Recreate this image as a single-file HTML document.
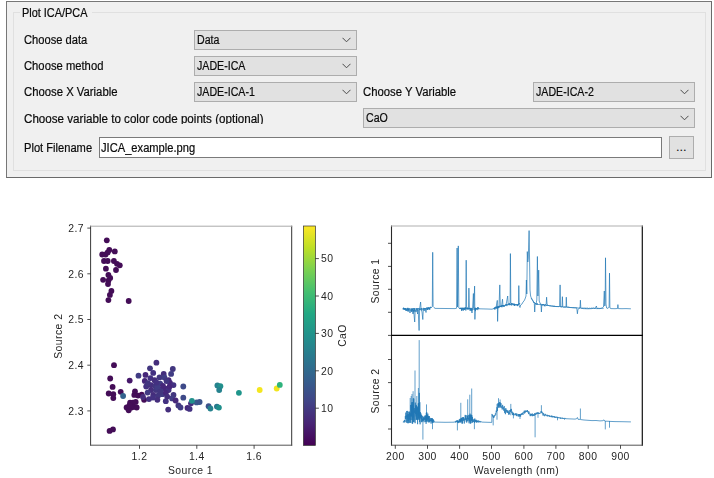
<!DOCTYPE html>
<html><head><meta charset="utf-8"><title>Plot ICA/PCA</title>
<style>
html,body{margin:0;padding:0;background:#fff;}
body{width:714px;height:478px;position:relative;overflow:hidden;font-family:"Liberation Sans",sans-serif;font-size:11px;color:#0a0a0a;-webkit-text-stroke:0.2px #0a0a0a;}
.abs{position:absolute;}
#frame{left:6px;top:1px;width:704px;height:175px;background:#f0f0f0;border:1px solid #777;border-right:1.5px solid #6a6a6a;border-bottom:1.5px solid #6a6a6a;box-sizing:content-box;}
#group{left:13px;top:12px;width:691px;height:157px;border:1px solid #e0e0e0;box-sizing:content-box;}
#gtitle{left:20px;top:6px;height:14px;line-height:14px;padding:0 2px;background:#f0f0f0;white-space:nowrap;width:68px;}
#gtitle span{display:inline-block;font-size:12px;transform:scaleX(0.909);transform-origin:0 50%;margin-left:-0.3px;}
.lbl{left:23.8px;height:16px;line-height:16px;white-space:nowrap;font-size:12px;transform-origin:0 50%;}
.combo{height:18px;background:#e1e1e1;border:1px solid #adadad;box-sizing:content-box;}
.combo span{position:absolute;left:2.4px;top:1px;line-height:16px;white-space:nowrap;font-size:12px;transform:scaleX(0.885);transform-origin:0 50%;}
.combo svg{position:absolute;right:5px;top:6px;}
#edit{left:99px;top:137px;width:561px;height:19px;background:#fff;border:1px solid #7a7a7a;box-sizing:content-box;}
#edit span{position:absolute;left:1.1px;top:2px;line-height:16px;white-space:nowrap;font-size:12px;transform:scaleX(0.929);transform-origin:0 50%;}
#btn{left:669px;top:136px;width:23px;height:21px;background:#e1e1e1;border:1px solid #adadad;box-sizing:content-box;}
#btn span{position:absolute;left:0;width:23px;text-align:center;top:3px;line-height:14px;letter-spacing:0.5px;}
svg text{font-family:"Liberation Sans",sans-serif;fill:#262626;}
</style></head><body>
<div id="frame" class="abs"></div>
<div id="group" class="abs"></div>
<div id="gtitle" class="abs"><span>Plot ICA/PCA</span></div>

<div class="abs lbl" style="top:32px;transform:scaleX(0.929);">Choose data</div>
<div class="abs lbl" style="top:58px;transform:scaleX(0.937);">Choose method</div>
<div class="abs lbl" style="top:84px;transform:scaleX(0.943);">Choose X Variable</div>
<div class="abs lbl" style="top:111px;height:13px;overflow:hidden;transform:scaleX(0.968);">Choose variable to color code points (optional)</div>
<div class="abs lbl" style="top:140px;transform:scaleX(0.928);">Plot Filename</div>
<div class="abs lbl" style="left:362.7px;top:84px;transform:scaleX(0.943);">Choose Y Variable</div>

<div class="abs combo" style="left:194px;top:30px;width:161px;"><span>Data</span><svg width="9" height="6" viewBox="0 0 9 6"><path d="M0.5,0.8 L4.5,4.8 L8.5,0.8" fill="none" stroke="#4a4a4a" stroke-width="1"/></svg></div>
<div class="abs combo" style="left:194px;top:56px;width:161px;"><span>JADE-ICA</span><svg width="9" height="6" viewBox="0 0 9 6"><path d="M0.5,0.8 L4.5,4.8 L8.5,0.8" fill="none" stroke="#4a4a4a" stroke-width="1"/></svg></div>
<div class="abs combo" style="left:194px;top:82px;width:161px;"><span>JADE-ICA-1</span><svg width="9" height="6" viewBox="0 0 9 6"><path d="M0.5,0.8 L4.5,4.8 L8.5,0.8" fill="none" stroke="#4a4a4a" stroke-width="1"/></svg></div>
<div class="abs combo" style="left:533px;top:82px;width:160px;"><span>JADE-ICA-2</span><svg width="9" height="6" viewBox="0 0 9 6"><path d="M0.5,0.8 L4.5,4.8 L8.5,0.8" fill="none" stroke="#4a4a4a" stroke-width="1"/></svg></div>
<div class="abs combo" style="left:363px;top:108px;width:330px;"><span>CaO</span><svg width="9" height="6" viewBox="0 0 9 6"><path d="M0.5,0.8 L4.5,4.8 L8.5,0.8" fill="none" stroke="#4a4a4a" stroke-width="1"/></svg></div>

<div id="edit" class="abs"><span>JICA_example.png</span></div>
<div id="btn" class="abs"><span>...</span></div>

<svg class="abs" style="left:0;top:0;" width="714" height="478" viewBox="0 0 714 478">
<defs>
<linearGradient id="vir" x1="0" y1="1" x2="0" y2="0">
<stop offset="0" stop-color="#440154"/><stop offset="0.1" stop-color="#482475"/><stop offset="0.2" stop-color="#414487"/><stop offset="0.3" stop-color="#355f8d"/><stop offset="0.4" stop-color="#2a788e"/><stop offset="0.5" stop-color="#21918c"/><stop offset="0.6" stop-color="#22a884"/><stop offset="0.7" stop-color="#44bf70"/><stop offset="0.8" stop-color="#7ad151"/><stop offset="0.9" stop-color="#bddf26"/><stop offset="1" stop-color="#fde725"/>
</linearGradient>
</defs>
<!-- scatter -->
<g><circle cx="106.8" cy="240.3" r="2.9" fill="#440d57"/><circle cx="102.2" cy="254.5" r="2.9" fill="#440d57"/><circle cx="105.6" cy="254.5" r="2.9" fill="#440d57"/><circle cx="109.3" cy="249.9" r="2.9" fill="#440d57"/><circle cx="114.8" cy="251.4" r="2.9" fill="#440d57"/><circle cx="107.7" cy="252.4" r="2.9" fill="#440d57"/><circle cx="104.0" cy="261.0" r="2.9" fill="#440d57"/><circle cx="107.7" cy="261.0" r="2.9" fill="#440d57"/><circle cx="113.9" cy="261.0" r="2.9" fill="#440d57"/><circle cx="117.0" cy="263.8" r="2.9" fill="#440d57"/><circle cx="119.8" cy="265.3" r="2.9" fill="#440d57"/><circle cx="105.9" cy="268.7" r="2.9" fill="#440d57"/><circle cx="116.0" cy="270.0" r="2.9" fill="#440d57"/><circle cx="108.4" cy="274.9" r="2.9" fill="#440d57"/><circle cx="110.2" cy="277.9" r="2.9" fill="#440d57"/><circle cx="103.1" cy="279.8" r="2.9" fill="#440d57"/><circle cx="108.4" cy="280.7" r="2.9" fill="#440d57"/><circle cx="108.0" cy="284.1" r="2.9" fill="#440d57"/><circle cx="111.4" cy="290.9" r="2.9" fill="#440d57"/><circle cx="109.9" cy="294.9" r="2.9" fill="#440d57"/><circle cx="108.4" cy="300.1" r="2.9" fill="#440d57"/><circle cx="128.7" cy="301.0" r="2.9" fill="#440d57"/><circle cx="114.0" cy="365.2" r="2.9" fill="#440d57"/><circle cx="110.2" cy="378.5" r="2.9" fill="#440d57"/><circle cx="112.6" cy="386.9" r="2.9" fill="#440d57"/><circle cx="108.7" cy="393.5" r="2.9" fill="#440d57"/><circle cx="113.3" cy="394.2" r="2.9" fill="#440d57"/><circle cx="113.3" cy="398.1" r="2.9" fill="#440d57"/><circle cx="120.7" cy="391.8" r="2.9" fill="#440d57"/><circle cx="135.0" cy="391.4" r="2.9" fill="#440d57"/><circle cx="134.3" cy="394.9" r="2.9" fill="#440d57"/><circle cx="138.1" cy="395.6" r="2.9" fill="#440d57"/><circle cx="141.7" cy="394.6" r="2.9" fill="#440d57"/><circle cx="144.1" cy="399.8" r="2.9" fill="#440d57"/><circle cx="130.1" cy="402.6" r="2.9" fill="#440d57"/><circle cx="132.9" cy="402.6" r="2.9" fill="#440d57"/><circle cx="135.7" cy="401.9" r="2.9" fill="#440d57"/><circle cx="126.6" cy="407.5" r="2.9" fill="#440d57"/><circle cx="128.7" cy="410.3" r="2.9" fill="#440d57"/><circle cx="131.5" cy="407.5" r="2.9" fill="#440d57"/><circle cx="134.3" cy="406.8" r="2.9" fill="#440d57"/><circle cx="136.7" cy="407.5" r="2.9" fill="#440d57"/><circle cx="129.4" cy="405.4" r="2.9" fill="#440d57"/><circle cx="109.6" cy="430.9" r="2.9" fill="#440d57"/><circle cx="113.0" cy="429.4" r="2.9" fill="#440d57"/><circle cx="129.7" cy="380.6" r="2.9" fill="#46186a"/><circle cx="123.1" cy="396.0" r="2.9" fill="#33638d"/><circle cx="156.4" cy="362.7" r="2.9" fill="#452e7c"/><circle cx="150.0" cy="368.3" r="2.9" fill="#42367f"/><circle cx="138.5" cy="375.7" r="2.9" fill="#413c84"/><circle cx="145.5" cy="374.9" r="2.9" fill="#46277a"/><circle cx="153.2" cy="372.9" r="2.9" fill="#433181"/><circle cx="163.7" cy="373.9" r="2.9" fill="#452e7c"/><circle cx="172.8" cy="369.0" r="2.9" fill="#42367f"/><circle cx="171.1" cy="373.9" r="2.9" fill="#413c84"/><circle cx="144.8" cy="380.9" r="2.9" fill="#46277a"/><circle cx="150.4" cy="378.1" r="2.9" fill="#433181"/><circle cx="154.6" cy="380.2" r="2.9" fill="#452e7c"/><circle cx="159.5" cy="377.4" r="2.9" fill="#42367f"/><circle cx="164.4" cy="377.4" r="2.9" fill="#413c84"/><circle cx="168.6" cy="380.2" r="2.9" fill="#46277a"/><circle cx="146.2" cy="386.5" r="2.9" fill="#433181"/><circle cx="151.1" cy="385.1" r="2.9" fill="#452e7c"/><circle cx="155.3" cy="385.8" r="2.9" fill="#42367f"/><circle cx="160.2" cy="383.7" r="2.9" fill="#413c84"/><circle cx="170.0" cy="383.0" r="2.9" fill="#46277a"/><circle cx="173.5" cy="385.1" r="2.9" fill="#433181"/><circle cx="151.1" cy="390.0" r="2.9" fill="#452e7c"/><circle cx="156.0" cy="390.0" r="2.9" fill="#42367f"/><circle cx="161.6" cy="389.3" r="2.9" fill="#413c84"/><circle cx="165.8" cy="388.6" r="2.9" fill="#46277a"/><circle cx="168.6" cy="390.0" r="2.9" fill="#433181"/><circle cx="153.2" cy="394.9" r="2.9" fill="#452e7c"/><circle cx="158.1" cy="395.6" r="2.9" fill="#42367f"/><circle cx="162.3" cy="394.2" r="2.9" fill="#413c84"/><circle cx="165.8" cy="392.8" r="2.9" fill="#46277a"/><circle cx="149.0" cy="399.1" r="2.9" fill="#433181"/><circle cx="157.4" cy="399.8" r="2.9" fill="#452e7c"/><circle cx="173.5" cy="394.9" r="2.9" fill="#42367f"/><circle cx="172.1" cy="398.4" r="2.9" fill="#413c84"/><circle cx="175.6" cy="400.5" r="2.9" fill="#46277a"/><circle cx="165.8" cy="401.2" r="2.9" fill="#433181"/><circle cx="168.2" cy="409.6" r="2.9" fill="#452e7c"/><circle cx="178.4" cy="405.4" r="2.9" fill="#42367f"/><circle cx="180.5" cy="407.5" r="2.9" fill="#413c84"/><circle cx="187.5" cy="407.9" r="2.9" fill="#46277a"/><circle cx="189.6" cy="408.9" r="2.9" fill="#433181"/><circle cx="191.0" cy="403.3" r="2.9" fill="#452e7c"/><circle cx="148.0" cy="383.2" r="2.9" fill="#42367f"/><circle cx="157.3" cy="387.4" r="2.9" fill="#413c84"/><circle cx="163.0" cy="386.0" r="2.9" fill="#46277a"/><circle cx="153.0" cy="397.6" r="2.9" fill="#433181"/><circle cx="167.2" cy="396.6" r="2.9" fill="#452e7c"/><circle cx="160.0" cy="392.0" r="2.9" fill="#42367f"/><circle cx="147.6" cy="392.6" r="2.9" fill="#413c84"/><circle cx="169.6" cy="386.6" r="2.9" fill="#46277a"/><circle cx="156.6" cy="382.6" r="2.9" fill="#433181"/><circle cx="143.0" cy="397.0" r="2.9" fill="#452e7c"/><circle cx="166.5" cy="381.0" r="2.9" fill="#42367f"/><circle cx="183.3" cy="386.5" r="2.9" fill="#3e4a89"/><circle cx="183.3" cy="397.7" r="2.9" fill="#3e4a89"/><circle cx="196.6" cy="402.4" r="2.9" fill="#3a5a8c"/><circle cx="199.6" cy="402.0" r="2.9" fill="#3b548b"/><circle cx="191.9" cy="400.8" r="2.9" fill="#21908c"/><circle cx="208.6" cy="406.2" r="2.9" fill="#3b528b"/><circle cx="210.4" cy="408.5" r="2.9" fill="#26828e"/><circle cx="217.4" cy="385.4" r="2.9" fill="#26828e"/><circle cx="220.4" cy="386.2" r="2.9" fill="#21908c"/><circle cx="219.2" cy="390.0" r="2.9" fill="#26828e"/><circle cx="216.9" cy="406.6" r="2.9" fill="#2a788e"/><circle cx="218.9" cy="407.6" r="2.9" fill="#1f8f8b"/><circle cx="238.9" cy="392.8" r="2.9" fill="#1f958b"/><circle cx="259.7" cy="390.0" r="2.9" fill="#f4e61e"/><circle cx="276.7" cy="388.5" r="2.9" fill="#f1e51d"/><circle cx="279.8" cy="384.9" r="2.9" fill="#2eb37c"/></g>
<g stroke-width="1" fill="none">
<line x1="90.6" y1="225.7" x2="90.6" y2="445.7" stroke="#3a3a3a"/>
<line x1="291.7" y1="225.7" x2="291.7" y2="445.7" stroke="#333"/>
<line x1="90.3" y1="226.2" x2="292.2" y2="226.2" stroke="#aaa"/>
<line x1="90.3" y1="445.2" x2="292.2" y2="445.2" stroke="#555"/>
</g>
<g stroke="#222" stroke-width="0.8">
<line x1="87.3" y1="228.1" x2="90.6" y2="228.1"/><line x1="87.3" y1="273.8" x2="90.6" y2="273.8"/><line x1="87.3" y1="319.5" x2="90.6" y2="319.5"/><line x1="87.3" y1="365.2" x2="90.6" y2="365.2"/><line x1="87.3" y1="410.9" x2="90.6" y2="410.9"/>
<line x1="139.5" y1="445.2" x2="139.5" y2="448.8" /><line x1="196.8" y1="445.2" x2="196.8" y2="448.8" /><line x1="254.1" y1="445.2" x2="254.1" y2="448.8" />
</g>
<!-- colorbar -->
<rect x="303.4" y="226" width="12" height="219.4" fill="url(#vir)"/>
<rect x="303.4" y="226" width="12" height="219.4" fill="none" stroke="#333" stroke-width="0.7"/>
<g stroke="#222" stroke-width="0.8">
<line x1="315.4" y1="258.6" x2="318.9" y2="258.6"/><line x1="315.4" y1="296" x2="318.9" y2="296"/><line x1="315.4" y1="333.4" x2="318.9" y2="333.4"/><line x1="315.4" y1="370.8" x2="318.9" y2="370.8"/><line x1="315.4" y1="408.2" x2="318.9" y2="408.2"/>
</g>
<!-- spectra -->
<path d="M402.8,308.6 L404.0,308.2 L405.0,309.5 L406.0,308.8 L407.0,311.0 L407.6,309.0 L408.5,310.5 L409.2,309.0 L410.0,313.0 L410.6,309.5 L411.5,312.0 L412.2,310.0 L413.0,314.0 L413.6,310.0 L414.7,322.0 L415.2,310.0 L416.0,312.0 L416.8,309.5 L417.6,314.0 L418.2,310.0 L419.1,330.5 L419.6,309.0 L420.6,302.0 L421.1,309.0 L422.0,312.0 L422.8,319.5 L423.3,309.0 L424.2,311.0 L425.0,308.5 L426.0,312.5 L426.6,308.5 L427.6,310.0 L428.5,308.0 L429.5,309.0 L430.5,307.5 L431.5,307.5 L432.3,306.5 L432.7,252.3 L433.1,306.5 L434.0,307.5 L435.0,308.4 L455.0,308.6 L456.6,308.2 L457.1,248.0 L457.5,307.0 L458.3,245.9 L458.8,308.0 L460.0,308.6 L461.0,307.5 L462.0,310.5 L463.0,308.0 L464.0,309.5 L465.0,307.5 L465.8,308.0 L466.2,260.2 L466.6,308.0 L467.5,309.5 L468.5,307.0 L468.9,288.1 L469.4,308.0 L470.2,311.0 L471.0,308.0 L472.0,313.0 L472.6,308.0 L473.4,293.5 L473.8,308.0 L474.6,286.1 L474.9,319.4 L475.3,308.0 L476.5,308.8 L478.0,307.0 L479.0,308.8 L487.0,309.0 L492.0,309.2 L494.0,308.5 L495.0,307.0 L496.0,308.0 L497.3,300.4 L497.6,321.4 L498.0,307.0 L499.0,306.5 L499.8,284.9 L500.3,306.5 L501.5,306.8 L502.5,299.2 L503.0,306.3 L504.5,306.0 L506.0,305.0 L507.7,296.0 L508.2,304.5 L509.5,304.0 L510.1,303.0 L510.4,253.6 L510.8,303.0 L512.0,303.8 L514.0,304.5 L516.0,305.0 L518.0,305.0 L518.5,304.0 L518.8,285.6 L519.2,305.5 L520.0,307.5 L520.6,305.0 L522.0,304.0 L523.0,302.0 L524.0,301.0 L525.0,299.0 L526.0,296.0 L526.4,280.0 L526.8,294.0 L527.3,251.6 L527.8,262.0 L528.3,258.0 L529.1,230.6 L529.6,262.0 L530.0,290.0 L530.6,296.0 L531.5,298.5 L533.0,301.0 L534.3,303.0 L534.7,312.0 L535.2,303.5 L536.0,304.0 L536.8,300.0 L537.4,256.5 L537.9,296.0 L538.7,270.1 L539.2,301.0 L540.0,303.0 L541.0,304.5 L541.4,312.0 L541.8,305.0 L543.0,304.5 L545.0,305.0 L546.2,304.0 L546.6,297.2 L547.1,305.0 L549.0,305.7 L553.0,306.2 L557.0,306.6 L559.6,306.5 L560.1,284.9 L560.5,306.8 L562.0,307.0 L562.4,296.7 L562.8,307.0 L565.0,307.2 L566.0,307.0 L566.3,297.2 L566.7,307.2 L570.0,307.5 L574.0,307.8 L576.8,308.0 L577.4,313.8 L577.9,309.5 L579.0,308.5 L580.0,308.0 L580.4,300.2 L580.8,308.0 L583.0,308.6 L588.0,308.8 L592.0,308.6 L594.0,308.0 L595.0,308.8 L596.4,306.0 L597.0,308.6 L600.0,308.6 L602.0,308.0 L603.5,307.0 L604.3,291.0 L604.8,306.0 L605.2,300.0 L605.5,257.8 L606.0,304.0 L606.6,308.0 L608.0,308.4 L609.1,307.0 L609.5,273.1 L609.9,308.0 L611.0,308.6 L615.0,308.7 L617.5,308.5 L617.9,304.6 L618.3,308.6 L622.0,308.7 L626.0,308.6 L630.9,308.8 M403.0,308.2 L403.3,309.6 L403.6,307.7 L403.9,309.3 L404.2,308.1 L404.5,309.8 L404.8,308.5 L405.1,309.5 L405.4,308.1 L405.7,310.7 L406.0,308.6 L406.3,309.0 L406.6,308.7 L406.9,310.9 L407.2,308.1 L407.5,308.8 L407.8,307.8 L408.1,311.8 L408.4,308.2 L408.7,310.1 L409.0,308.7 L409.3,308.9 L409.6,308.3 L409.9,308.9 L410.2,308.7 L410.5,309.1 L410.8,308.9 L411.1,309.6 L411.4,308.5 L411.7,311.2 L412.0,308.5 L412.3,310.3 L412.6,308.5 L412.9,310.4 L413.2,308.6 L413.5,309.3 L413.8,308.1 L414.1,312.2 L414.4,308.2 L414.7,310.7 L415.0,308.8 L415.3,309.3 L415.6,308.8 L415.9,309.1 L416.2,308.4 L416.5,309.7 L416.8,308.3 L417.1,309.7 L417.4,308.2 L417.7,311.5 M418.0,309.2 L418.3,309.3 L418.6,308.3 L418.9,309.7 L419.2,308.3 L419.5,309.6 L419.8,309.2 L420.1,310.2 L420.4,308.5 L420.7,309.3 L421.0,309.0 L421.3,309.3 L421.6,308.1 L421.9,310.3 L422.2,308.8 L422.5,309.0 L422.8,308.7 L423.1,308.8 L423.4,307.9 L423.7,308.8 L424.0,308.1 L424.3,309.0 L424.6,308.4 L424.9,309.7 L425.2,308.3 L425.5,309.3 L425.8,308.2 L426.1,308.7 L426.4,308.0 L426.7,308.4 L427.0,307.2 L427.3,309.5 L427.6,307.8 L427.9,309.7 L428.2,307.7 L428.5,308.3 L428.8,307.0 L429.1,308.7 L429.4,307.7 L429.7,309.9 L430.0,307.5 L430.3,307.8 L430.6,306.8 L430.9,307.8 L431.2,307.2 M459.5,308.6 L459.8,308.8 L460.1,308.0 L460.4,308.9 L460.7,308.0 L461.0,309.1 L461.3,308.2 L461.6,310.8 L461.9,308.1 L462.2,309.5 L462.5,307.7 L462.8,308.9 L463.1,308.6 L463.4,310.6 L463.7,307.7 L464.0,308.9 L464.3,308.6 L464.6,310.0 L464.9,307.6 L465.2,308.9 L465.5,307.6 L465.8,310.5 L466.1,308.1 L466.4,309.2 L466.7,308.7 L467.0,308.9 L467.3,307.6 L467.6,309.0 L467.9,307.9 L468.2,309.0 L468.5,307.8 L468.8,309.7 L469.1,308.5 L469.4,309.0 L469.7,308.0 L470.0,308.9 L470.3,308.6 L470.6,309.6 L470.9,307.8 L471.2,309.7 L471.5,308.5 L471.8,310.8 L472.1,308.7 L472.4,308.9 L472.7,308.6 L473.0,309.4 L473.3,308.9 L473.6,309.0 L473.9,308.5 L474.2,309.7 L474.5,308.8 L474.8,309.2 L475.1,307.8 L475.4,311.1 L475.7,308.1 L476.0,310.0 L476.3,308.2 L476.6,309.0 L476.9,308.9 L477.2,309.0 L477.5,307.8 L477.8,310.1 L478.1,307.8 L478.4,309.0 L478.7,308.2 M494.0,307.9 L494.3,309.1 L494.6,307.8 L494.9,309.6 L495.2,307.8 L495.5,308.2 L495.8,306.8 L496.1,308.8 L496.4,306.7 L496.7,308.1 L497.0,306.5 L497.3,308.5 L497.6,306.7 L497.9,307.8 L498.2,306.0 L498.5,308.1 L498.8,306.4 L499.1,307.7 L499.4,305.8 L499.7,307.1 L500.0,305.9 L500.3,306.7 L500.6,305.8 L500.9,306.9 L501.2,306.1 L501.5,306.8 L501.8,305.1 L502.1,307.2 L502.4,305.2 L502.7,306.1 L503.0,305.0 L503.3,306.2 L503.6,305.2 L503.9,306.6 L504.2,305.4 L504.5,306.3 L504.8,305.3 L505.1,305.8 L505.4,304.7 L505.7,305.2 L506.0,304.3 L506.3,305.3 L506.6,304.2 L506.9,306.1 L507.2,304.4 L507.5,304.6 L507.8,304.2 L508.1,305.2 L508.4,304.2 L508.7,304.4 L509.0,303.3 L509.3,304.9 L509.6,303.7 L509.9,305.3 L510.2,303.7 L510.5,304.8 L510.8,303.9 L511.1,304.4 L511.4,303.4 L511.7,305.5 L512.0,303.4 L512.3,304.5 L512.6,303.7 L512.9,304.5 L513.2,304.3 L513.5,304.8 L513.8,303.6 L514.1,305.7 L514.4,303.8 L514.7,306.0 L515.0,304.3 L515.3,304.7 L515.6,304.2 L515.9,304.9 L516.2,304.6 L516.5,305.1 L516.8,304.2 L517.1,305.3 L517.4,304.6 L517.7,306.1 L518.0,304.0 L518.3,305.1 L518.6,304.6 L518.9,304.5 L519.2,303.4 L519.5,304.1 L519.8,303.2 M531.0,298.2 L531.4,298.7 L531.8,298.4 L532.2,299.7 L532.6,300.2 L533.0,301.3 L533.4,301.4 L533.8,302.8 L534.2,302.0 L534.6,302.6 L535.0,303.0 L535.4,304.0 L535.8,303.4 L536.2,304.6 L536.6,303.5 L537.0,305.0 L537.4,303.4 L537.8,304.8 L538.2,304.1 L538.6,304.6 L539.0,304.2 L539.4,304.3 L539.8,304.0 L540.2,305.1 L540.6,304.3 L541.0,304.6 L541.4,304.3 L541.8,305.3 L542.2,304.3 L542.6,305.3 L543.0,304.2 L543.4,305.1 L543.8,304.3 L544.2,306.1 L544.6,305.0 L545.0,306.3 L545.4,304.6 L545.8,305.2 L546.2,304.9 L546.6,305.9 L547.0,304.7 L547.4,305.7 L547.8,305.1 M548.0,305.2 L548.5,306.0 L549.0,305.3 L549.5,305.9 L550.0,305.5 L550.5,305.8 L551.0,305.6 L551.5,306.3 L552.0,305.7 L552.5,306.3 L553.0,305.9 L553.5,306.6 L554.0,305.7 L554.5,306.7 L555.0,306.0 L555.5,306.6 L556.0,306.1 L556.5,306.8 L557.0,306.0 L557.5,306.5 L558.0,306.4 L558.5,306.6 L559.0,306.3 L559.5,306.9 L560.0,306.4 L560.5,306.6 L561.0,306.3 L561.5,306.7 L562.0,306.4 L562.5,306.8 L563.0,306.7 L563.5,307.2 L564.0,306.8 L564.5,306.9 L565.0,306.7 L565.5,307.3 L566.0,306.7 L566.5,307.3 L567.0,306.7 L567.5,307.3 L568.0,306.8 L568.5,307.2 L569.0,307.1 L569.5,307.4 L570.0,307.2 L570.5,307.7 L571.0,307.1 L571.5,307.6 L572.0,307.1 L572.5,307.7 L573.0,307.4 L573.5,307.6 L574.0,307.2 L574.5,308.1 L575.0,307.6 L575.5,308.1 L576.0,307.3 L576.5,307.9 L577.0,307.6 L577.5,307.8 L578.0,307.6 L578.5,308.0 L579.0,307.7 L579.5,308.0 L580.0,307.6 L580.5,308.2 L581.0,307.9 L581.5,308.4 L582.0,307.8 L582.5,308.2 L583.0,307.8 L583.5,308.1 L584.0,307.8 L584.5,308.2 L585.0,307.7 L585.5,308.6 L586.0,308.0 L586.5,308.2 L587.0,308.1 L587.5,308.2 L588.0,307.8 L588.5,308.6 L589.0,308.0 L589.5,308.2 L590.0,308.1 L590.5,308.4 L591.0,307.8 L591.5,308.2 L592.0,307.9 L592.5,308.2 L593.0,308.1 L593.5,308.2 L594.0,307.9 L594.5,308.3 L595.0,308.1 L595.5,308.5 L596.0,308.2 L596.5,308.6 L597.0,308.2 L597.5,308.4 L598.0,308.2 L598.5,308.3 L599.0,308.1 L599.5,308.4 L600.0,308.2 L600.5,308.4 L601.0,308.1 L601.5,308.4 L602.0,308.3 L602.5,308.6 L603.0,308.1 L603.5,308.5" fill="none" stroke="#1f77b4" stroke-width="0.7" stroke-linejoin="round"/>
<path d="M403.1,422.2 L403.3,421.9 L403.6,422.2 L403.8,421.2 L404.1,422.5 L404.3,420.3 L404.6,421.3 L404.8,420.1 L405.1,422.2 L405.3,416.2 L405.6,419.1 L405.8,412.6 L406.1,417.2 L406.3,415.3 L406.6,422.7 L406.8,411.0 L407.1,418.9 L407.3,410.9 L407.6,423.2 L407.8,414.5 L408.1,421.1 L408.3,414.0 L408.6,423.2 L408.8,411.7 L409.1,419.6 L409.3,411.6 L409.6,422.8 L409.8,412.7 L410.1,416.6 L410.3,413.4 L410.6,422.9 L410.8,405.0 L411.1,415.9 L411.3,404.8 L411.6,416.6 L411.8,402.4 L412.1,423.4 L412.3,402.0 L412.6,423.8 L412.8,404.8 L413.1,417.8 L413.3,398.3 L413.6,422.2 L413.8,398.6 L414.1,421.8 L414.3,408.1 L414.6,412.8 L414.8,410.4 L415.1,423.2 L415.3,402.6 L415.6,414.2 L415.8,405.6 L416.1,416.5 L416.3,404.9 L416.6,419.5 L416.8,406.1 L417.1,419.9 L417.3,406.8 L417.6,424.2 L417.8,407.9 L418.1,415.4 L418.3,403.3 L418.6,418.8 L418.8,403.2 L419.1,418.1 L419.3,392.9 L419.6,422.1 L419.8,402.2 L420.1,424.3 L420.3,412.0 L420.6,417.7 L420.8,413.2 L421.1,419.2 L421.3,414.7 L421.6,422.2 L421.8,415.4 L422.1,421.9 L422.3,418.9 L422.6,420.7 L422.8,416.0 L423.1,420.4 L423.3,417.5 L423.6,420.6 L423.8,417.3 L424.1,422.2 L424.3,417.6 L424.6,419.6 L424.8,415.7 L425.1,420.0 L425.3,415.9 L425.6,421.9 L425.8,415.3 L426.1,423.8 L426.3,412.8 L426.6,421.3 L426.8,412.3 L427.1,422.1 L427.3,414.9 L427.6,420.7 L427.8,413.6 L428.1,419.1 L428.3,415.9 L428.6,422.4 L428.8,416.3 L429.1,421.4 L429.3,416.1 L429.6,422.3 L429.8,419.4 L430.1,421.4 L430.3,417.9 L430.6,421.0 L430.8,419.8 L431.1,423.6 L431.3,418.4 L431.6,421.3 L431.8,418.0 L432.1,422.3 L432.3,418.3 L432.6,422.7 L432.8,419.1 L433.1,422.9 L433.3,419.5 L433.6,421.5 L433.8,420.5 L434.1,422.2 L434.3,421.6 L434.6,422.2 L435.2,422.1 L445.0,422.3 L454.0,422.2 L454.4,421.9 L454.7,422.2 L455.0,421.7 L455.3,422.6 L455.6,421.3 L455.9,422.0 L456.2,420.8 L456.5,421.8 L456.8,420.5 L457.1,422.4 L457.4,420.3 L457.7,422.4 L458.0,420.5 L458.3,423.1 L458.6,421.0 L458.9,422.5 L459.2,419.6 L459.5,422.1 L459.8,418.9 L460.1,422.8 L460.4,419.3 L460.7,422.0 L461.0,418.2 L461.3,421.5 L461.6,417.9 L461.9,423.5 L462.2,417.6 L462.5,423.5 L462.8,417.2 L463.1,421.1 L463.4,417.1 L463.7,420.4 L464.0,417.9 L464.3,423.5 L464.6,419.0 L464.9,419.6 L465.2,414.9 L465.5,419.7 L465.8,415.4 L466.1,421.5 L466.4,418.3 L466.7,422.6 L467.0,415.2 L467.3,419.1 L467.6,416.1 L467.9,421.4 L468.2,417.9 L468.5,419.5 L468.8,414.9 L469.1,423.3 L469.4,415.0 L469.7,421.5 L470.0,413.6 L470.3,423.7 L470.6,414.9 L470.9,423.3 L471.2,414.7 L471.5,420.6 L471.8,415.1 L472.1,422.8 L472.4,416.9 L472.7,422.3 L473.0,418.9 L473.3,422.0 L473.6,420.3 L473.9,420.8 L474.2,419.3 L474.5,422.9 L474.8,418.5 L475.1,421.3 L475.4,420.2 L475.7,422.0 L476.0,419.7 L476.3,422.7 L476.6,420.4 L476.9,422.1 L477.2,420.5 L477.5,422.0 L477.8,420.9 L478.1,422.6 L478.4,420.5 L478.7,421.7 L479.0,421.4 L479.3,421.8 L479.6,420.9 L479.9,422.4 L480.2,421.2 L480.5,422.2 L480.8,421.6 L482.0,422.1 L488.0,422.3 L491.8,422.4 L491.9,414.0 L492.2,414.2 L492.6,416.4 L493.0,415.0 L493.4,417.8 L493.8,416.3 L494.2,417.4 L494.6,415.2 L495.0,416.0 L495.4,413.5 L495.8,414.6 L496.2,410.7 L496.6,412.2 L497.0,407.2 L497.4,410.9 L497.8,403.4 L498.2,406.8 L498.6,403.2 L499.0,406.3 L499.4,402.1 L499.8,407.5 L500.2,402.4 L500.6,406.6 L501.0,403.2 L501.4,407.7 L501.8,406.4 L502.2,409.5 L502.6,404.9 L503.0,408.7 L503.4,407.4 L503.8,410.7 L504.2,406.1 L504.6,412.8 L505.0,409.2 L505.4,414.2 L505.8,408.1 L506.2,411.7 L506.6,409.8 L507.0,412.8 L507.4,410.4 L507.8,413.0 L508.2,410.6 L508.6,414.6 L509.0,411.8 L509.4,414.4 L509.8,410.0 L510.2,411.9 L510.6,409.5 L511.0,411.6 L511.4,408.9 L511.8,413.2 L512.2,411.7 L512.6,415.0 L513.0,412.5 L513.4,415.3 L513.8,413.3 L514.2,415.1 L514.6,414.6 L515.0,415.3 L515.4,413.4 L515.8,415.1 L516.2,413.4 L516.6,416.1 L517.0,413.7 L517.4,415.3 L517.8,414.8 L518.2,416.5 L518.6,414.0 L519.0,416.4 L519.4,414.1 L519.8,416.5 L520.2,414.1 L520.6,416.5 L521.0,413.8 L521.4,415.0 L521.8,413.2 L522.2,414.4 L522.6,412.7 L523.0,414.9 L523.4,412.4 L523.8,412.9 L524.2,410.8 L524.6,413.5 L525.0,410.6 L525.4,412.5 L525.8,410.6 L526.2,411.8 L526.6,410.7 L527.0,412.0 L527.4,410.0 L527.8,412.3 L528.2,411.3 L528.6,414.1 L529.0,411.6 L529.4,414.2 L529.8,413.9 L530.2,416.1 L530.6,413.7 L531.0,416.1 L531.4,414.0 L531.8,415.4 L532.2,413.4 L532.6,416.2 L533.0,414.2 L533.4,415.8 L533.8,414.3 L534.2,416.0 L534.6,413.3 L535.0,414.6 L535.4,413.4 L535.8,414.9 L536.2,412.7 L536.6,414.1 L537.0,412.7 L537.4,413.7 L537.8,412.2 L538.2,413.9 L538.6,412.6 L539.0,413.8 L539.4,412.9 L539.8,413.9 L540.2,412.9 L540.6,412.8 L541.0,411.2 L541.4,412.4 L541.8,411.5 L542.2,413.4 L542.6,412.5 L543.0,415.5 L543.4,413.2 L543.8,415.3 L544.2,414.9 L544.6,416.2 L545.0,413.8 L545.4,415.4 L545.8,414.3 L546.2,415.6 L546.6,415.1 L547.0,416.2 L547.4,414.8 L547.8,416.4 L548.2,415.3 L548.6,416.1 L549.0,415.2 L549.4,416.8 L549.8,415.5 L550.2,416.5 L550.6,416.1 L551.0,417.1 L551.4,415.6 L551.8,417.2 L552.2,415.8 L552.6,417.3 L553.0,416.3 L553.4,417.1 L553.8,416.1 L554.2,417.6 L554.6,416.3 L555.0,417.8 L555.4,416.8 L555.8,417.8 L556.2,416.7 L556.6,417.5 L557.0,416.8 L557.4,418.1 L557.8,417.4 L558.2,417.7 L558.6,417.0 L559.0,418.2 L559.4,417.7 L559.8,418.3 L560.2,417.2 L560.6,418.8 L561.0,418.0 L561.4,418.4 L561.8,417.6 L562.2,418.7 L562.6,417.8 L563.0,419.0 L563.4,418.4 L563.8,418.9 L564.2,417.9 L564.6,419.5 L565.0,418.2 L566.0,418.7 L570.0,418.9 L575.0,419.1 L576.5,418.8 L577.4,417.5 L578.0,419.3 L580.0,419.4 L580.8,419.6 L584.0,420.0 L588.0,420.3 L592.0,420.6 L596.0,420.5 L600.0,420.9 L603.0,420.7 L604.0,419.8 L604.8,421.1 L605.8,421.2 L609.1,421.3 L609.9,421.4 L615.0,421.6 L622.0,421.7 L630.9,421.9 M413.1,420.0 L413.1,391.2 M415.0,420.0 L415.0,370.5 M419.2,420.0 L419.2,340.1 M422.9,420.0 L422.9,439.6 M426.5,420.0 L426.5,404.4 M432.5,420.0 L432.5,429.2 M457.4,421.0 L457.4,430.4 M460.8,421.0 L460.8,402.8 M467.7,421.0 L467.7,399.3 M469.8,421.0 L469.8,394.7 M471.7,421.0 L471.7,388.5 M474.4,421.0 L474.4,429.2 M493.2,416.0 L493.2,425.4 M497.0,419.7 L497.0,403.9 M498.5,408.0 L498.5,398.2 M500.1,408.0 L500.1,399.5 M510.8,415.3 L510.8,403.9 M513.4,413.0 L513.4,418.4 M520.0,414.0 L520.0,419.0 M535.1,414.0 L535.1,437.3 M538.0,413.0 L538.0,417.8 M541.4,413.0 L541.4,405.2 M557.5,417.0 L557.5,420.3 M580.4,419.0 L580.4,408.5 M605.3,421.0 L605.3,429.4 M609.5,421.0 L609.5,427.7 M416.8,420.0 L416.8,396.0 M418.4,420.0 L418.4,388.0 M412.0,420.0 L412.0,394.0 M410.2,420.0 L410.2,398.0 M411.2,420.0 L411.2,396.0" fill="none" stroke="#1f77b4" stroke-width="0.7" stroke-linejoin="round"/>
<g fill="none">
<line x1="391.5" y1="225.5" x2="391.5" y2="445.7" stroke="#2a2a2a" stroke-width="1.1"/>
<line x1="642.3" y1="225.5" x2="642.3" y2="445.7" stroke="#111" stroke-width="1.2"/>
<line x1="391" y1="226" x2="642.9" y2="226" stroke="#b0b0b0" stroke-width="1.2"/>
<line x1="391" y1="445.2" x2="642.9" y2="445.2" stroke="#555" stroke-width="1"/>
<line x1="391" y1="335.4" x2="642.9" y2="335.4" stroke="#000" stroke-width="1.3"/>
</g>
<g stroke="#222" stroke-width="0.8">
<line x1="388" y1="243.3" x2="391.5" y2="243.3"/><line x1="388" y1="266.4" x2="391.5" y2="266.4"/><line x1="388" y1="289.3" x2="391.5" y2="289.3"/><line x1="388" y1="312.3" x2="391.5" y2="312.3"/><line x1="388" y1="335.4" x2="391.5" y2="335.4"/>
<line x1="388" y1="359.5" x2="391.5" y2="359.5"/><line x1="388" y1="382.6" x2="391.5" y2="382.6"/><line x1="388" y1="405.7" x2="391.5" y2="405.7"/><line x1="388" y1="429" x2="391.5" y2="429"/>
<line x1="395.3" y1="445.2" x2="395.3" y2="448.8"/><line x1="427.5" y1="445.2" x2="427.5" y2="448.8"/><line x1="459.6" y1="445.2" x2="459.6" y2="448.8"/><line x1="491.5" y1="445.2" x2="491.5" y2="448.8"/><line x1="523.9" y1="445.2" x2="523.9" y2="448.8"/><line x1="555.9" y1="445.2" x2="555.9" y2="448.8"/><line x1="588.2" y1="445.2" x2="588.2" y2="448.8"/><line x1="620.5" y1="445.2" x2="620.5" y2="448.8"/>
</g>
</svg>
<svg class="abs" style="left:0;top:0;filter:grayscale(1);" width="714" height="478" viewBox="0 0 714 478">
<g font-size="10.4" letter-spacing="0.45" text-anchor="end">
<text x="84" y="231.9">2.7</text><text x="84" y="277.6">2.6</text><text x="84" y="323.3">2.5</text><text x="84" y="369">2.4</text><text x="84" y="414.7">2.3</text>
</g>
<g font-size="10.4" letter-spacing="0.45" text-anchor="middle">
<text x="139.5" y="460">1.2</text><text x="196.8" y="460">1.4</text><text x="254.1" y="460">1.6</text>
<text x="190.5" y="473.5">Source 1</text>
<text transform="translate(62,336.2) rotate(-90)">Source 2</text>
</g>
<g font-size="10.4" letter-spacing="0.45" text-anchor="start">
<text x="321" y="262.3">50</text><text x="321" y="299.7">40</text><text x="321" y="337.1">30</text><text x="321" y="374.5">20</text><text x="321" y="411.9">10</text>
</g>
<g font-size="10.4" letter-spacing="0.45" text-anchor="middle">
<text x="395.3" y="460">200</text><text x="427.5" y="460">300</text><text x="459.6" y="460">400</text><text x="491.5" y="460">500</text><text x="523.9" y="460">600</text><text x="555.9" y="460">700</text><text x="588.2" y="460">800</text><text x="620.5" y="460">900</text>
<text x="516.5" y="473.5">Wavelength (nm)</text>
<text transform="translate(379,281) rotate(-90)">Source 1</text>
<text transform="translate(379,391) rotate(-90)">Source 2</text>
</g>
<text font-size="10.4" letter-spacing="0.45" text-anchor="middle" transform="translate(346,335.5) rotate(-90)">CaO</text>
</svg>
</body></html>
